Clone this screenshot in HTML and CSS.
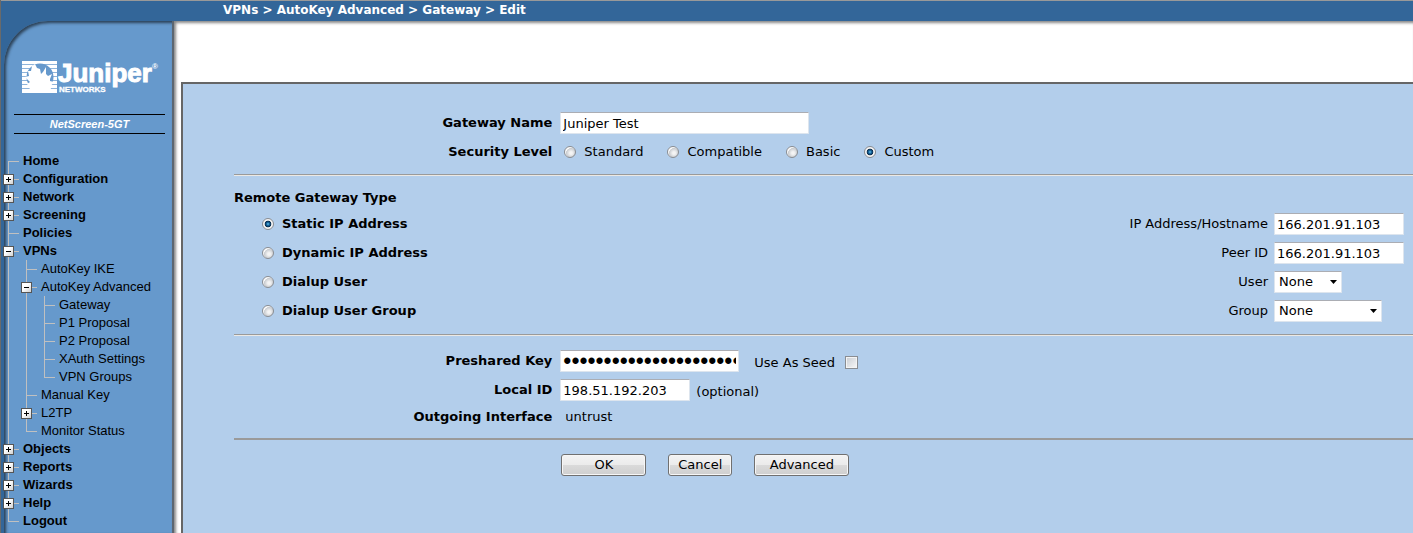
FILE: index.html
```html
<!DOCTYPE html>
<html lang="en">
<head>
<meta charset="utf-8">
<title>VPNs &gt; AutoKey Advanced &gt; Gateway &gt; Edit</title>
<link rel="stylesheet" href="styles.css">
</head>
<body>
<header class="topbar">VPNs &gt; AutoKey Advanced &gt; Gateway &gt; Edit</header>
<div class="layout">
  <div class="rail">
    <aside class="sidebar">
      <svg class="logo" width="140" height="36" viewBox="0 0 140 36" role="img" aria-label="Juniper Networks">
        <path fill="#fff" d="M0 0h35v32H0z"/>
        <path stroke="#8fb4da" stroke-width="1" d="M0 3.5h35M0 7.5h35M0 11.5h35M0 15.5h35M0 19.5h35M0 23.5h35M0 27.5h35"/>
        <circle cx="18" cy="16" r="13.5" fill="#6699cc"/>
        <path fill="#fff" d="M13 3l2 4 3 1 1 5 2-2 3-5 0 7 2 2 4-2-2 5 0 2 4 1-4 5 1 2-3 4H10l-2-5-3-4 3-2-5-5 4-1-1-5 3 0 1-5z"/>
        <path fill="#fff" d="M8 27h20l4 5H4z"/>
        <text class="logo-name" x="36" y="21">Juniper</text>
        <text class="logo-sub" x="37" y="31">NETWORKS</text>
        <text class="logo-mark" x="130" y="8">®</text>
      </svg>
      <p class="model">NetScreen-5GT</p>
      <nav>
        <ul class="tree">
          <li><div class="node"><a href="#">Home</a></div></li>
          <li><div class="node"><button class="toggle" aria-label="Expand Configuration"></button><a href="#">Configuration</a></div></li>
          <li><div class="node"><button class="toggle" aria-label="Expand Network"></button><a href="#">Network</a></div></li>
          <li><div class="node"><button class="toggle" aria-label="Expand Screening"></button><a href="#">Screening</a></div></li>
          <li><div class="node"><a href="#">Policies</a></div></li>
          <li><div class="node"><button class="toggle open" aria-label="Collapse VPNs"></button><a href="#">VPNs</a></div>
            <ul>
              <li><div class="node"><a href="#">AutoKey IKE</a></div></li>
              <li><div class="node"><button class="toggle open" aria-label="Collapse AutoKey Advanced"></button><a href="#">AutoKey Advanced</a></div>
                <ul>
                  <li><div class="node"><a href="#">Gateway</a></div></li>
                  <li><div class="node"><a href="#">P1 Proposal</a></div></li>
                  <li><div class="node"><a href="#">P2 Proposal</a></div></li>
                  <li><div class="node"><a href="#">XAuth Settings</a></div></li>
                  <li><div class="node"><a href="#">VPN Groups</a></div></li>
                </ul>
              </li>
              <li><div class="node"><a href="#">Manual Key</a></div></li>
              <li><div class="node"><button class="toggle" aria-label="Expand L2TP"></button><a href="#">L2TP</a></div></li>
              <li><div class="node"><a href="#">Monitor Status</a></div></li>
            </ul>
          </li>
          <li><div class="node"><button class="toggle" aria-label="Expand Objects"></button><a href="#">Objects</a></div></li>
          <li><div class="node"><button class="toggle" aria-label="Expand Reports"></button><a href="#">Reports</a></div></li>
          <li><div class="node"><button class="toggle" aria-label="Expand Wizards"></button><a href="#">Wizards</a></div></li>
          <li><div class="node"><button class="toggle" aria-label="Expand Help"></button><a href="#">Help</a></div></li>
          <li><div class="node"><a href="#">Logout</a></div></li>
        </ul>
      </nav>
    </aside>
  </div>
  <main class="main">
    <form class="panel">
      <section class="group">
        <div class="row">
          <label class="name" for="gw">Gateway Name</label>
          <input class="field wide" id="gw" type="text" value="Juniper Test">
        </div>
        <div class="row">
          <span class="name" id="sec">Security Level</span>
          <div class="choices" role="radiogroup" aria-labelledby="sec">
            <label class="choice"><input type="radio" name="sec">Standard</label>
            <label class="choice"><input type="radio" name="sec">Compatible</label>
            <label class="choice"><input type="radio" name="sec">Basic</label>
            <label class="choice"><input type="radio" name="sec" checked>Custom</label>
          </div>
        </div>
      </section>
      <hr>
      <section class="group types">
        <h2>Remote Gateway Type</h2>
        <div class="type">
          <label class="choice strong"><input type="radio" name="type" checked>Static IP Address</label>
          <label for="ip">IP Address/Hostname</label>
          <div class="cell"><input class="field" id="ip" type="text" value="166.201.91.103"></div>
        </div>
        <div class="type">
          <label class="choice strong"><input type="radio" name="type">Dynamic IP Address</label>
          <label for="peer">Peer ID</label>
          <div class="cell"><input class="field" id="peer" type="text" value="166.201.91.103"></div>
        </div>
        <div class="type">
          <label class="choice strong"><input type="radio" name="type">Dialup User</label>
          <label for="user">User</label>
          <div class="cell"><select class="field short" id="user"><option>None</option></select></div>
        </div>
        <div class="type">
          <label class="choice strong"><input type="radio" name="type">Dialup User Group</label>
          <label for="group">Group</label>
          <div class="cell"><select class="field medium" id="group"><option>None</option></select></div>
        </div>
      </section>
      <hr>
      <section class="group keys">
        <div class="row">
          <label class="name" for="key">Preshared Key</label>
          <div class="inline">
            <input class="field key" id="key" type="password" value="abcdefghijklmnopqrstuvwxyz1234">
            <label class="seed">Use As Seed<input type="checkbox"></label>
          </div>
        </div>
        <div class="row">
          <label class="name" for="local">Local ID</label>
          <div class="inline">
            <input class="field" id="local" type="text" value="198.51.192.203">
            <span class="note">(optional)</span>
          </div>
        </div>
        <div class="row plain">
          <span class="name">Outgoing Interface</span>
          <span class="value">untrust</span>
        </div>
      </section>
      <hr class="solid">
      <div class="row actions">
        <div class="buttons">
          <button class="btn ok" type="button">OK</button>
          <button class="btn" type="button">Cancel</button>
          <button class="btn adv" type="button">Advanced</button>
        </div>
      </div>
    </form>
  </main>
</div>
</body>
</html>
```

FILE: styles.css
```css
* { box-sizing: border-box; }

body {
  margin: 0;
  min-height: 100vh;
  display: flex;
  flex-direction: column;
  background: #336699;
  border-left: 1px solid #6a6a6a;
  color: #000;
  font: 13px/18px Verdana, "DejaVu Sans", sans-serif;
}

.topbar {
  height: 21px;
  padding-left: 222px;
  border-top: 1px solid #999;
  background: #336699;
  color: #fff;
  font-size: 12px;
  font-weight: bold;
}

.layout { flex: 1; display: flex; }

.rail { flex: none; width: 173px; padding-left: 3px; }

.sidebar {
  height: 100%;
  padding-top: 40px;
  border-top-left-radius: 44px;
  border-right: 2px solid #5c6670;
  background: #6699cc;
  box-shadow: inset 2px 2px 3px #2c4258;
  font-family: Arial, "Liberation Sans", sans-serif;
  font-size: 13px;
}

.logo { display: block; margin-left: 18px; overflow: visible; fill: #fff; }
.logo-name { font-size: 26px; font-weight: bold; stroke: #fff; stroke-width: 1px; }
.logo-sub { font-size: 8px; font-weight: bold; stroke: #fff; stroke-width: 0.3px; }
.logo-mark { font-size: 8px; font-weight: bold; }

.model {
  margin: 17px 7px 0 10px;
  border: solid #000;
  border-width: 1px 0;
  color: #fff;
  font-size: 11px;
  font-weight: bold;
  font-style: italic;
  text-align: center;
}

.tree { margin-top: 18px; font-weight: bold; }
.tree, .tree ul { margin-bottom: 0; padding-left: 4px; list-style: none; }
.tree ul { margin-top: 0; padding-left: 18px; font-weight: normal; }

.tree li { background: linear-gradient(#c0c0c0, #c0c0c0) 0 0 / 1px 100% no-repeat; }
.tree > li:first-child { background-position: 0 9px; }
.tree li:last-child { background-size: 1px 9px; }

.node {
  display: flex;
  align-items: center;
  height: 18px;
  background: linear-gradient(#c0c0c0, #c0c0c0) 0 9px / 11px 1px no-repeat;
}
.node a { color: #000; text-decoration: none; white-space: nowrap; }
.node a:first-child { margin-left: 15px; }

.toggle {
  flex: none;
  width: 11px;
  height: 11px;
  margin: 0 9px 0 -5px;
  padding: 0;
  border: 1px solid #555;
  background:
    linear-gradient(#000, #000) center / 5px 1px no-repeat,
    linear-gradient(#000, #000) center / 1px 5px no-repeat,
    linear-gradient(135deg, #fff 40%, #d0d0d0);
}
.toggle.open {
  background:
    linear-gradient(#000, #000) center / 5px 1px no-repeat,
    linear-gradient(135deg, #fff 40%, #d0d0d0);
}

.main {
  flex: 1;
  display: flex;
  padding: 61px 0 0 7px;
  background: #fff;
  box-shadow: inset 2px 2px 3px #888;
}

.panel {
  flex: 1;
  padding: 28px 0 0 51px;
  border: solid #666;
  border-width: 2px 0 0 2px;
  background: #b3ceeb;
}

.group { display: flex; flex-direction: column; gap: 7px; padding-bottom: 11px; }

hr {
  height: 2px;
  margin: 0;
  border: solid;
  border-width: 1px 0;
  border-color: #9a9a9a #ece9e4;
  border-bottom-color: #ece9e4;
}
hr.solid { border-color: #9a9a9a; }

.row {
  display: grid;
  grid-template-columns: 27% 1fr;
  column-gap: 8px;
  align-items: center;
  min-height: 22px;
}
.row.plain { min-height: 18px; }
.name, h2, .strong { font-weight: bold; }
.name { text-align: right; }

.field {
  width: 130px;
  height: 22px;
  padding: 0 2px;
  border: 1px solid #dde5ee;
  border-top-color: #abadb3;
  border-radius: 1px;
  background-color: #fff;
  color: #000;
  font: inherit;
}
.wide { width: 249px; }
.key { width: 179px; font: 23px/20px "Liberation Sans", Arial, sans-serif; }
.short { width: 68px; }
.medium { width: 108px; }

select.field {
  appearance: none;
  padding-left: 4px;
  background-image: url("data:image/svg+xml,%3Csvg xmlns='http://www.w3.org/2000/svg' width='7' height='4'%3E%3Cpath d='M0 0h7L3.5 4z'/%3E%3C/svg%3E");
  background-repeat: no-repeat;
  background-position: right 4px center;
}

.choices { display: flex; gap: 24px; padding-left: 4px; }
.choice { display: flex; align-items: center; gap: 9px; }
.choices .choice { gap: 8px; }

input[type="radio"], input[type="checkbox"] {
  appearance: none;
  flex: none;
  width: 12px;
  height: 12px;
  margin: 0;
  border: 1px solid #8a8d92;
  border-radius: 50%;
  background: radial-gradient(circle at 60% 60%, #f4f4f4 15%, #c9ccd0 55%, #fafafa 60%);
}
input[type="radio"]:checked {
  background: radial-gradient(circle at 50% 50%, #6cc4ec 0, #14649c 22%, #0b2c4c 42%, #f4f4f4 52%);
}
input[type="checkbox"] {
  width: 13px;
  height: 13px;
  border-radius: 0;
  background: linear-gradient(135deg, #c8ccd2, #f8f8f8);
  box-shadow: inset 0 0 0 1px #f4f4f4;
}

.types { padding-top: 13px; padding-bottom: 12px; }
h2 { margin: 0; font-size: 13px; line-height: 18px; }
.types h2 { margin-bottom: -1px; }
.type {
  display: grid;
  grid-template-columns: 1fr auto 139px;
  column-gap: 6px;
  align-items: center;
}
.type .choice { padding-left: 28px; gap: 8px; }
.cell { display: flex; }

.keys { padding-top: 14px; padding-bottom: 12px; }
.inline { display: flex; align-items: center; gap: 6px; }
.seed { display: flex; align-items: center; gap: 10px; padding: 3px 0 0 9px; }
.note { padding-top: 3px; }
.value { padding-left: 5px; }

.actions { padding-top: 14px; }
.buttons { grid-column: 2; display: flex; gap: 22px; padding-left: 1px; }
.btn {
  min-width: 64px;
  height: 22px;
  padding: 0;
  border: 1px solid #707070;
  border-radius: 3px;
  background: linear-gradient(#f3f3f3, #ebebeb 50%, #dadada 50%, #cfcfcf);
  box-shadow: inset 0 0 0 1px #f6f6f6;
  color: #000;
  font: inherit;
}
.ok { width: 85px; }
.adv { width: 95px; }
```
